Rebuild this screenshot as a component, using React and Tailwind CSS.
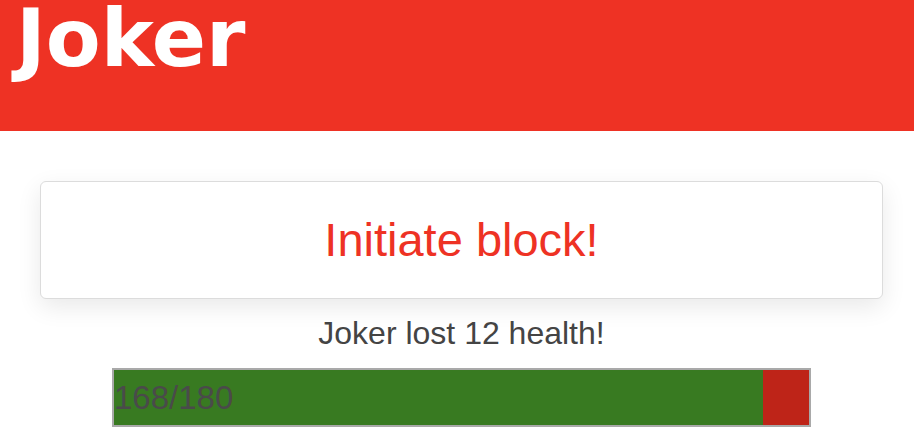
export default function App() {
  const hp = 168;
  const max = 180;

  return (
    <div className="min-h-screen bg-white" style={{ fontFamily: '"Liberation Sans", Arial, sans-serif' }}>
      {/* header */}
      <header className="h-[131px] bg-[#ee3224] overflow-hidden">
        <h1
          className="pl-[16px] text-[80px] leading-[78px] font-bold text-white"
          style={{ fontFamily: '"Comic Sans MS", "DejaVu Sans", sans-serif' }}
        >
          Joker
        </h1>
      </header>

      <main className="pt-[50px] pl-[9px] flex flex-col items-center">
        <button className="w-[843px] h-[118px] bg-white border border-[#dcdcdc] rounded-[6px] shadow-[0_8px_24px_rgba(0,0,0,0.09)] text-[#ee3224] text-[47px] leading-[50px]">
          Initiate block!
        </button>

        <p className="mt-[14px] text-[32px] leading-[40px] text-[#444]">Joker lost 12 health!</p>

        <div className="mt-[15px] w-[699px] h-[59px] border-2 border-[#a9a9a9] bg-[#be2418] relative">
          <div className="h-full bg-[#387a21]" style={{ width: `${(hp / max) * 100}%` }} />
          <span className="absolute left-0 top-0 h-full flex items-center text-[33px] text-[#4a4a4a]">
            {hp}/{max}
          </span>
        </div>
      </main>
    </div>
  );
}
